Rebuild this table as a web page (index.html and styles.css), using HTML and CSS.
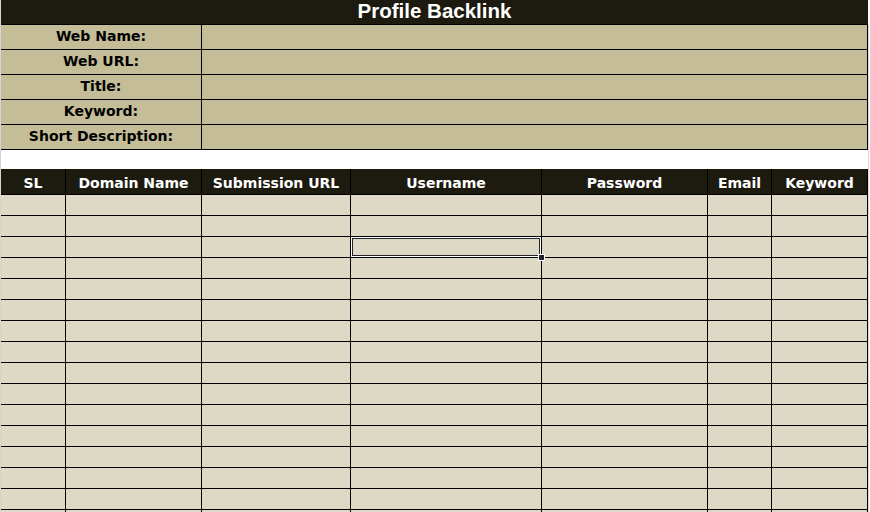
FILE: index.html
```html
<!DOCTYPE html>
<html lang="en">
<head>
<meta charset="utf-8">
<title>Profile Backlink</title>
<link rel="stylesheet" href="styles.css">
</head>
<body>
<div class="sheet">
  <div class="title">Profile Backlink</div>
  <div class="info">
    <div class="label">Web Name:</div><div class="value"></div>
    <div class="label">Web URL:</div><div class="value"></div>
    <div class="label">Title:</div><div class="value"></div>
    <div class="label">Keyword:</div><div class="value"></div>
    <div class="label">Short Description:</div><div class="value"></div>
  </div>
  <div class="spacer"></div>
  <div class="grid">
    <div class="head">SL</div>
    <div class="head">Domain Name</div>
    <div class="head">Submission URL</div>
    <div class="head">Username</div>
    <div class="head">Password</div>
    <div class="head">Email</div>
    <div class="head">Keyword</div>

    <div class="cell"></div><div class="cell"></div><div class="cell"></div><div class="cell"></div><div class="cell"></div><div class="cell"></div><div class="cell"></div>
    <div class="cell"></div><div class="cell"></div><div class="cell"></div><div class="cell"></div><div class="cell"></div><div class="cell"></div><div class="cell"></div>
    <div class="cell"></div><div class="cell"></div><div class="cell"></div><div class="cell selected"><span class="handle"></span></div><div class="cell"></div><div class="cell"></div><div class="cell"></div>
    <div class="cell"></div><div class="cell"></div><div class="cell"></div><div class="cell"></div><div class="cell"></div><div class="cell"></div><div class="cell"></div>
    <div class="cell"></div><div class="cell"></div><div class="cell"></div><div class="cell"></div><div class="cell"></div><div class="cell"></div><div class="cell"></div>
    <div class="cell"></div><div class="cell"></div><div class="cell"></div><div class="cell"></div><div class="cell"></div><div class="cell"></div><div class="cell"></div>
    <div class="cell"></div><div class="cell"></div><div class="cell"></div><div class="cell"></div><div class="cell"></div><div class="cell"></div><div class="cell"></div>
    <div class="cell"></div><div class="cell"></div><div class="cell"></div><div class="cell"></div><div class="cell"></div><div class="cell"></div><div class="cell"></div>
    <div class="cell"></div><div class="cell"></div><div class="cell"></div><div class="cell"></div><div class="cell"></div><div class="cell"></div><div class="cell"></div>
    <div class="cell"></div><div class="cell"></div><div class="cell"></div><div class="cell"></div><div class="cell"></div><div class="cell"></div><div class="cell"></div>
    <div class="cell"></div><div class="cell"></div><div class="cell"></div><div class="cell"></div><div class="cell"></div><div class="cell"></div><div class="cell"></div>
    <div class="cell"></div><div class="cell"></div><div class="cell"></div><div class="cell"></div><div class="cell"></div><div class="cell"></div><div class="cell"></div>
    <div class="cell"></div><div class="cell"></div><div class="cell"></div><div class="cell"></div><div class="cell"></div><div class="cell"></div><div class="cell"></div>
    <div class="cell"></div><div class="cell"></div><div class="cell"></div><div class="cell"></div><div class="cell"></div><div class="cell"></div><div class="cell"></div>
    <div class="cell"></div><div class="cell"></div><div class="cell"></div><div class="cell"></div><div class="cell"></div><div class="cell"></div><div class="cell"></div>
    <div class="cell"></div><div class="cell"></div><div class="cell"></div><div class="cell"></div><div class="cell"></div><div class="cell"></div><div class="cell"></div>
  </div>
</div>
</body>
</html>
```
FILE: styles.css
```css
html, body {
  margin: 0;
  padding: 0;
  background: #ffffff;
  overflow: hidden;
}

.sheet {
  width: 867px;
  border-left: 1px solid #d4d4d4;
  font-family: "DejaVu Sans", "Liberation Sans", sans-serif;
  font-weight: bold;
  font-size: 14px;
}

.title {
  height: 24px;
  line-height: 22px;
  background: #1d1b10;
  color: #ffffff;
  text-align: center;
  font-family: "Liberation Sans", Arial, sans-serif;
  font-size: 20.5px;
  font-weight: bold;
}

.info {
  display: grid;
  grid-template-columns: 200px 665px;
  grid-auto-rows: 24px;
  gap: 1px;
  padding: 1px 1px 1px 0;
  background: #000000;
  box-shadow: 1px 0 0 #d9d9d9;
}

.label,
.value {
  background: #c4bd97;
}

.label {
  color: #000000;
  text-align: center;
  line-height: 23px;
}

.spacer {
  height: 19px;
  box-shadow: 1px 0 0 #d9d9d9;
}

.grid {
  display: grid;
  grid-template-columns: 64px 135px 148px 190px 165px 63px 95px;
  grid-template-rows: 25px;
  grid-auto-rows: 20px;
  gap: 1px;
  padding-right: 1px;
  background: #000000;
  box-shadow: 1px 0 0 #d9d9d9;
}

.head {
  background: #1d1b10;
  color: #ffffff;
  text-align: center;
  padding-top: 4px;
  line-height: 21px;
  white-space: nowrap;
}

.cell {
  background: #ddd9c4;
}

.selected {
  position: relative;
  box-shadow: inset 0 0 0 1px #ffffff, inset 0 0 0 2px #23232f;
}

.handle {
  position: absolute;
  right: -4px;
  bottom: -4px;
  width: 5px;
  height: 5px;
  background: #23232f;
  border: 1px solid #ffffff;
  z-index: 2;
}
```
